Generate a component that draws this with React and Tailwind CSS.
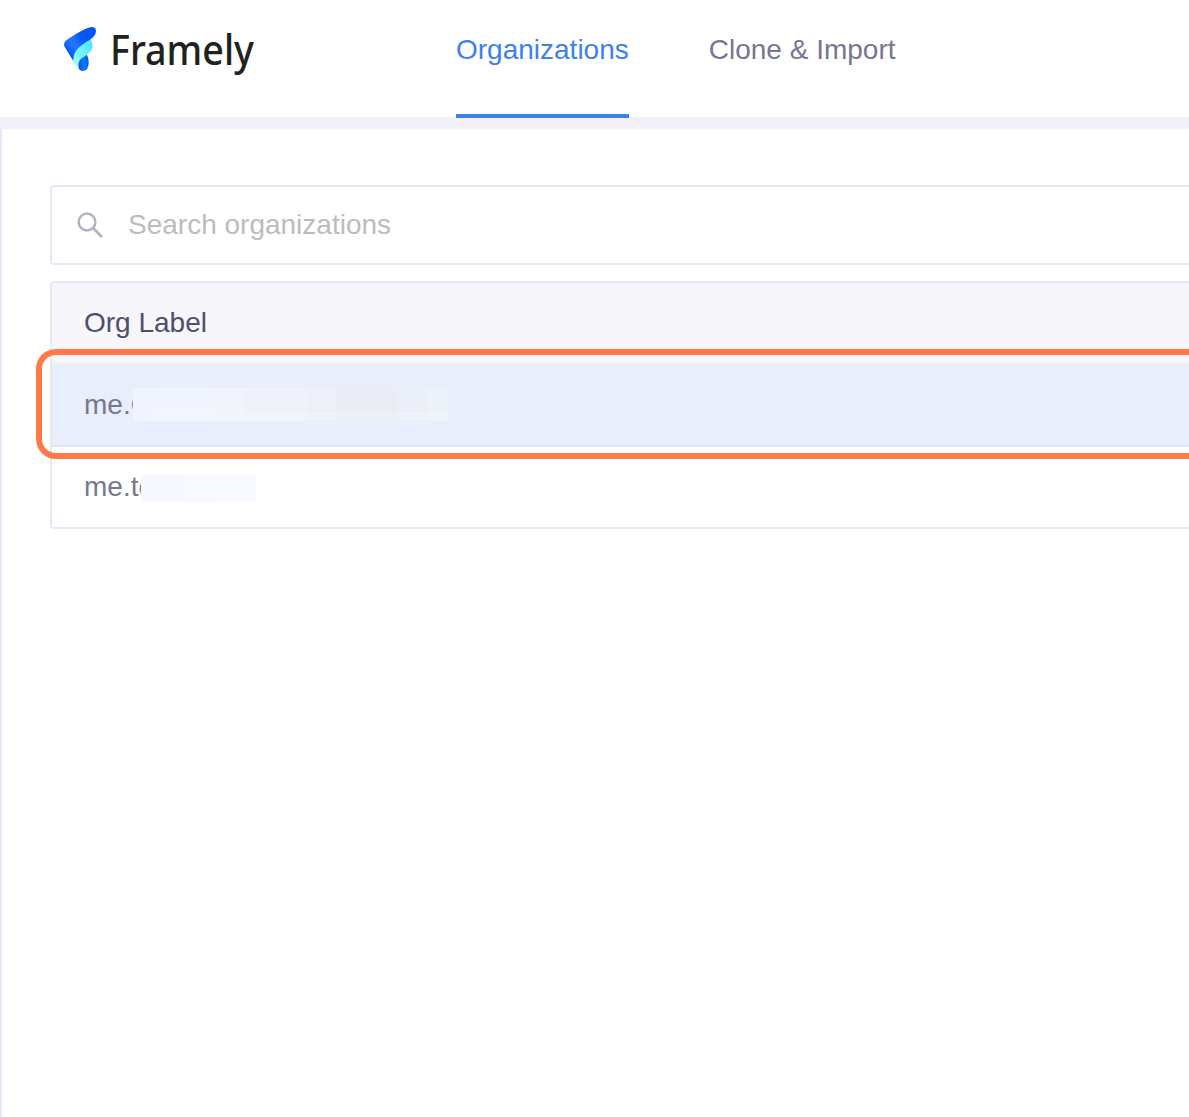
function LogoMark() {
  return (
    <svg viewBox="0 0 180 195" className="h-[65px] w-[60px] shrink-0" aria-hidden="true">
      <defs>
        <linearGradient id="top" x1="45" y1="105" x2="130" y2="40" gradientUnits="userSpaceOnUse">
          <stop offset="0" stopColor="#0050f5" />
          <stop offset="0.28" stopColor="#2878fc" />
          <stop offset="0.6" stopColor="#0759f5" />
          <stop offset="1" stopColor="#0052ff" />
        </linearGradient>
        <linearGradient id="middle" x1="70" y1="135" x2="125" y2="90" gradientUnits="userSpaceOnUse">
          <stop offset="0" stopColor="#9dfcff" />
          <stop offset="0.4" stopColor="#78f3ff" />
          <stop offset="1" stopColor="#55e5ff" />
        </linearGradient>
        <linearGradient id="bottom" x1="85" y1="150" x2="116" y2="145" gradientUnits="userSpaceOnUse">
          <stop offset="0" stopColor="#0750df" />
          <stop offset="0.5" stopColor="#087df8" />
          <stop offset="1" stopColor="#0060ee" />
        </linearGradient>
      </defs>
      <path d="M110 118C118 134 117 149 113 158C108 169 94 171 87 162L74 140Z" fill="url(#bottom)" />
      <path d="M68 132C70 108 87 88 119 71C130 80 130 99 122 109C113 121 98 126 90 135C84 143 85 151 87 162C77 149 68 143 68 132Z" fill="url(#middle)" />
      <path d="M43 94C41 84 44 78 51 74C74 60 100 41 124 36C136 35 140 44 137 54C133 69 115 76 101 86C82 99 69 113 70 138Z" fill="url(#top)" />
    </svg>
  );
}

function SearchIcon() {
  return (
    <svg viewBox="0 0 28 28" className="ml-[24px] h-7 w-7 shrink-0" fill="none" stroke="#b4b3c1" aria-hidden="true">
      <circle cx="11" cy="11" r="8.4" strokeWidth="2.5" />
      <path d="m17 17 9 9" strokeWidth="2.8" />
    </svg>
  );
}

const redactionColors = [
  "bg-[#f0f4fd]", "bg-[#f1f5fe]", "bg-[#f1f5fe]", "bg-[#f1f4fd]",
  "bg-[#eff2fb]", "bg-[#eff2fa]", "bg-[#edf0f8]", "bg-[#eaedf6]",
  "bg-[#ebeff8]", "bg-[#edf1fa]",
];
const redactionWidths = [
  "w-[20px]", "w-[31px]", "w-[31px]", "w-[30px]", "w-[31px]",
  "w-[30px]", "w-[30px]", "w-[62px]", "w-[31px]", "w-[19px]",
];

export default function App() {
  return (
    <div className="flex h-[1117px] w-full flex-col overflow-hidden bg-white font-['Liberation_Sans',Arial,sans-serif] text-[28px] leading-8 text-[#77778f]">
      <header className="flex h-[117px] shrink-0 items-start">
        <div className="flex h-[95px] w-[456px] items-start pt-[15px] pl-[50px]">
          <LogoMark />
          <span className="mt-[2px] origin-left scale-x-[0.897] font-['Noto_Sans','Open_Sans',sans-serif] text-[42px] leading-[64px] font-medium whitespace-nowrap text-[#202220]">
            Framely
          </span>
        </div>
        <nav className="flex gap-[80px]">
          <a className="relative z-10 h-[118px] border-b-4 border-[#3d82ec] pt-[34px] text-[#3d82ec]">Organizations</a>
          <a className="h-[118px] pt-[34px]">Clone &amp; Import</a>
        </nav>
      </header>
      <div className="h-3 shrink-0 bg-[#f2f1f8]" />
      <main className="relative grow border-l-2 border-[#e8e7f5] pt-[56px] pl-[48px]">
        <div className="flex h-20 items-center rounded-l-[4px] border-2 border-r-0 border-[#e8e7f5]">
          <SearchIcon />
          <span className="ml-6 text-[#bcbcbf]">Search organizations</span>
        </div>
        <section className="mt-4 h-[248px] overflow-hidden rounded-l-[4px] border-2 border-r-0 border-[#e8e7f5]">
          <div className="flex h-[82px] items-center border-b-2 border-[#efeff0] bg-[#f7f6fb] pl-8 text-[#4e4e6d]">
            Org Label
          </div>
          <div className="flex h-[82px] items-center border-b-2 border-[#e4e5f4] bg-[#e8eefc] pl-8">
            <div className="w-[49px] whitespace-nowrap">me.C</div>
            <div className="relative mt-[-1px] flex h-[33px]">
              {redactionColors.map((color, i) => (
                <div key={i} className={`${redactionWidths[i]} ${color} border-b-8 border-white/15`} />
              ))}
            </div>
          </div>
          <div className="flex h-[80px] items-center pl-8">
            <div className="w-[57px] whitespace-nowrap">me.te</div>
            <div className="relative mt-[2px] flex h-[27px]">
              <div className="w-[42px] bg-[#f7f8fd]" />
              <div className="w-[32px] bg-[#f6f9fe]" />
              <div className="w-[41px] bg-[#f7faff]" />
            </div>
          </div>
        </section>
        <div className="absolute top-[220px] right-0 left-[34px] h-[110px] rounded-l-[20px] border-[6px] border-r-0 border-[#ff7847]" />
      </main>
    </div>
  );
}
